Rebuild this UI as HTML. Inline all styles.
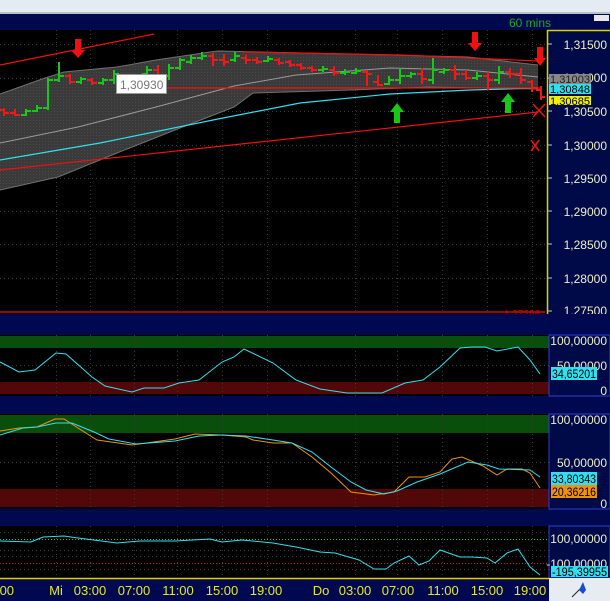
<!DOCTYPE html>
<html><head><meta charset="utf-8"><style>
html,body{margin:0;padding:0;width:610px;height:601px;overflow:hidden;background:#000;}
svg{display:block}
text{font-family:"Liberation Sans",sans-serif;}
</style></head><body>
<svg width="610" height="601" viewBox="0 0 610 601" xmlns="http://www.w3.org/2000/svg">
<defs>
<pattern id="dots" width="3" height="3" patternUnits="userSpaceOnUse"><rect width="3" height="3" fill="#3a3a3a"/><rect width="1" height="1" fill="#4a4a4a"/></pattern>
</defs>
<rect x="0" y="0" width="610" height="13" fill="#e4ebf3"/>
<rect x="0" y="12" width="610" height="2" fill="#b8c0cc"/>
<rect x="0" y="14" width="610" height="16" fill="#00094e"/>
<text x="509" y="27" font-size="12" fill="#1fa61f">60 mins</text>
<rect x="594" y="15" width="15" height="6" fill="#e8e8e8"/>
<rect x="0" y="30" width="547" height="283" fill="#000"/>
<g stroke="#3a3a3a" stroke-dasharray="1,3" stroke-width="1">
<path d="M56.5 30V313M90.5 30V313M134.5 30V313M177.5 30V313M222.5 30V313M267.5 30V313M355.5 30V313M397.5 30V313M442.5 30V313M487.5 30V313M532.5 30V313"/>
<path d="M0 44.5H547M0 78.5H547M0 111.5H547M0 145.5H547M0 178.5H547M0 211.5H547M0 244.5H547M0 278.5H547"/>
</g>
<path d="M0 94 L45 78 L64 72 L117 67 L156 60 L210 52 L218 51 L304 53 L390 55 L468 57 L538 65 L538 89 L429 87 L351 90 L253 93 L234 107 L175 130 L117 153 L58 177 L0 190 Z" fill="url(#dots)"/>
<path d="M0 94 L45 78 L64 72 L117 67 L156 60 L210 52 L218 51 L304 53 L390 55 L468 57 L538 65" fill="none" stroke="#707070"/>
<path d="M538 89 L429 87 L351 90 L253 93 L234 107 L175 130 L117 153 L58 177 L0 190" fill="none" stroke="#707070"/>
<path d="M0 143 L78 127 L156 107 L234 86 L296 75 L390 68 L468 70 L538 77" fill="none" stroke="#9a9a9a"/>
<path d="M0 160 L100 143 L218 119 L300 103 L390 94 L470 90 L538 88" fill="none" stroke="#30e0f0" stroke-width="1.2"/>
<g stroke="#f01010" stroke-width="1.2" fill="none">
<path d="M0 65 L154 34"/>
<path d="M0 170 L538 112"/>
<path d="M166 88 H542"/>
<path d="M242 52 L400 55 L538 61"/>
<path d="M0 312 H545"/>
</g>
<text x="504" y="317" font-size="10" fill="#c00">1,27296</text>
<path fill="none" stroke="#18c818" stroke-width="2" d="
M26 109V116M21 115H26M26 111H31
M37 105V112M32 111H37M37 108H42
M48 78V110M43 108H48M48 80H53
M59 62V82M54 80H59M59 76H64
M81 77V84M76 82H81M81 79H86
M103 78V85M98 83H103M103 80H108
M114 70V84M109 80H114M114 74H119
M147 66V78M142 74H147M147 70H152
M169 64V80M164 76H169M169 68H174
M180 58V70M175 68H180M180 60H185
M191 55V64M186 62H191M191 58H196
M202 52V60M197 58H202M202 56H207
M235 52V62M230 60H235M235 56H240
M268 56V62M263 61H268M268 59H273
M323 66V72M318 70H323M323 69H328
M345 69V75M340 73H345M345 72H350
M356 68V74M351 73H356M356 71H361
M389 76V85M384 84H389M389 80H394
M400 68V84M395 80H400M400 76H405
M411 72V78M406 76H411M411 74H416
M433 58V84M428 80H433M433 70H438
M444 68V74M439 72H444M444 70H449
M477 72V80M472 78H477M477 76H482
M499 66V84M494 80H499M499 72H504"/>
<path fill="none" stroke="#f01818" stroke-width="2" d="
M4 108V116M0 110H4M4 113H9
M15 109V116M10 113H15M15 115H20
M70 74V84M65 76H70M70 82H75
M92 78V85M87 80H92M92 83H97
M158 65V82M153 70H158M158 78H163
M213 53V66M208 56H213M213 60H218
M224 54V66M219 60H224M224 62H229
M246 55V64M241 58H246M246 60H251
M257 57V64M252 60H257M257 62H262
M279 58V65M274 60H279M279 63H284
M290 60V67M285 62H290M290 65H295
M301 63V70M296 65H301M301 68H306
M312 66V72M307 68H312M312 70H317
M334 66V76M329 70H334M334 73H339
M367 70V86M362 72H367M367 74H372
M378 75V86M373 82H378M378 85H383
M422 68V84M417 74H422M422 79H427
M455 65V80M450 70H455M455 74H460
M466 70V80M461 74H466M466 78H471
M488 72V90M483 76H488M488 80H493
M510 68V78M505 72H510M510 74H515
M521 68V84M516 74H521M521 80H526
M532 80V92M527 82H532M532 88H537
M541 86V100M536 90H541M541 97H545"/>
<rect x="116.5" y="74.5" width="50" height="19" fill="#fff" stroke="#9a9a9a"/>
<text x="120" y="89" font-size="12" fill="#777">1,30930</text>
<g fill="#f01010">
<path d="M75 39H81V50H85L78 58L71 50H75Z"/>
<path d="M472 32H478V43H482L475 51L468 43H472Z"/>
<path d="M537 47H543V58H546L540 66L534 58H537Z"/>
</g>
<g fill="#18c818">
<path d="M394 123H400V112H404L397 103L390 112H394Z"/>
<path d="M505 113H511V102H515L508 93L501 102H505Z"/>
</g>
<g stroke="#f01010" stroke-width="1.5"><path d="M533 104L545 117M533 117L545 104"/><path d="M531 140L539 151M531 151L539 140"/></g>
<rect x="547" y="30" width="63" height="284" fill="#000a48"/>
<path d="M547.5 30V314M547 30.5H610" stroke="#e0d000" stroke-width="1.5"/>
<g stroke="#c0c0c0"><path d="M548 44H552M548 78H552M548 111H552M548 145H552M548 178H552M548 211H552M548 244H552M548 278H552M548 311H552"/></g>
<g font-size="12" fill="#f0f0c8" text-anchor="end">
<text x="607" y="49">1,31500</text>
<text x="607" y="82">1,31000</text>
<text x="607" y="116">1,30500</text>
<text x="607" y="150">1,30000</text>
<text x="607" y="183">1,29500</text>
<text x="607" y="216">1,29000</text>
<text x="607" y="249">1,28500</text>
<text x="607" y="283">1,28000</text>
<text x="607" y="315">1,27500</text>
</g>
<rect x="549" y="74" width="42" height="10" fill="#888"/>
<text x="550" y="83" font-size="11" fill="#222" textLength="40" lengthAdjust="spacingAndGlyphs">1,31003</text>
<rect x="549" y="84" width="42" height="10" fill="#30e0f0"/>
<text x="550" y="93" font-size="11" fill="#000" textLength="40" lengthAdjust="spacingAndGlyphs">1,30848</text>
<rect x="549" y="96" width="42" height="9" fill="#f0f000"/>
<text x="550" y="105" font-size="11" fill="#000" textLength="40" lengthAdjust="spacingAndGlyphs">1,30685</text>
<rect x="0" y="314" width="610" height="21" fill="#000950"/>
<rect x="0" y="396" width="610" height="18" fill="#000950"/>
<rect x="0" y="509" width="610" height="17" fill="#000950"/>
<rect x="0" y="335" width="549" height="61" fill="#000"/>
<rect x="0" y="336" width="549" height="12" fill="#0a4e0c"/>
<rect x="0" y="382" width="549" height="12" fill="#520808"/>
<g stroke="#3a3a3a" stroke-dasharray="1,3"><path d="M56.5 335V396M90.5 335V396M134.5 335V396M177.5 335V396M222.5 335V396M267.5 335V396M355.5 335V396M397.5 335V396M442.5 335V396M487.5 335V396M532.5 335V396M0 365.5H549"/></g>
<path d="M0 362L19 372L35 370L56 353L66 354L92 377L105 386L132 392L144 388L164 388L179 383L199 380L222 362L234 357L244 349L273 363L296 380L320 389L347 393L382 393L405 383L423 380L440 367L460 348L472 347L485 347L497 351L518 347L530 360L540 374" fill="none" stroke="#30e0f0"/>
<rect x="549" y="335" width="61" height="61" fill="#000a48" stroke="#2a40d0"/>
<g font-size="12" fill="#f0f0c8" text-anchor="end"><text x="607" y="345">100,00000</text><text x="607" y="370">50,00000</text><text x="607" y="395">0</text></g>
<rect x="551" y="367" width="46" height="13" fill="#30e0f0"/><text x="552" y="378" font-size="12" fill="#000" textLength="44" lengthAdjust="spacingAndGlyphs">34,65201</text>
<rect x="0" y="414" width="549" height="95" fill="#000"/>
<rect x="0" y="415" width="549" height="18" fill="#0a4e0c"/>
<rect x="0" y="489" width="549" height="18" fill="#520808"/>
<g stroke="#3a3a3a" stroke-dasharray="1,3"><path d="M56.5 414V509M90.5 414V509M134.5 414V509M177.5 414V509M222.5 414V509M267.5 414V509M355.5 414V509M397.5 414V509M442.5 414V509M487.5 414V509M532.5 414V509M0 462.5H549"/></g>
<path d="M0 431L19 428L37 427L55 419L64 419L78 428L97 440L132 445L175 439L195 434L222 435L246 437L253 440L273 443L292 443L312 457L331 473L351 492L374 495L394 492L409 477L425 477L440 472L452 459L462 457L483 466L497 475L507 469L522 469L530 473L540 488" fill="none" stroke="#f09010"/>
<path d="M0 435L23 428L37 427L56 423L72 423L94 432L109 439L136 444L175 441L199 436L222 435L246 436L273 440L292 443L312 452L331 467L351 482L366 490L384 494L397 491L417 482L440 474L468 462L487 465L499 469L530 470L540 477" fill="none" stroke="#30e0f0"/>
<rect x="549" y="414" width="61" height="95" fill="#000a48" stroke="#2a40d0"/>
<g font-size="12" fill="#f0f0c8" text-anchor="end"><text x="607" y="424">100,00000</text><text x="607" y="467">50,00000</text><text x="607" y="508">0</text></g>
<rect x="551" y="472" width="46" height="13" fill="#30e0f0"/><text x="552" y="483" font-size="12" fill="#000" textLength="44" lengthAdjust="spacingAndGlyphs">33,80343</text>
<rect x="551" y="485" width="46" height="13" fill="#f09010"/><text x="552" y="496" font-size="12" fill="#000" textLength="44" lengthAdjust="spacingAndGlyphs">20,36216</text>
<rect x="0" y="526" width="549" height="52" fill="#000"/>
<g stroke="#3a3a3a" stroke-dasharray="1,3"><path d="M56.5 526V578M90.5 526V578M134.5 526V578M177.5 526V578M222.5 526V578M267.5 526V578M355.5 526V578M397.5 526V578M442.5 526V578M487.5 526V578M532.5 526V578M0 532.5H549M0 550.5H549M0 556.5H549M0 569.5H549"/></g>
<path d="M0 539.5H549" stroke="#30c030" stroke-dasharray="1,2"/>
<path d="M0 563.5H549" stroke="#d02020" stroke-dasharray="1,2"/>
<path d="M0 541L31 542L43 537L64 536L78 538L117 543L140 541L175 541L210 539L222 542L242 540L273 543L296 547L320 552L335 553L359 560L374 569L386 569L394 563L409 556L419 565L429 561L440 550L460 557L472 557L487 558L495 563L507 553L518 549L530 567L540 575" fill="none" stroke="#30e0f0"/>
<rect x="549" y="526" width="61" height="52" fill="#000a48" stroke="#2a40d0"/>
<g font-size="12" fill="#f0f0c8" text-anchor="end"><text x="607" y="543">100,00000</text><text x="607" y="568">-100,00000</text></g>
<rect x="551" y="566" width="57" height="11" fill="#30e0f0"/><text x="552" y="576" font-size="12" fill="#000" textLength="55" lengthAdjust="spacingAndGlyphs">-195,39955</text>
<rect x="0" y="578" width="549" height="23" fill="#000950"/>
<path d="M0 578.5H549" stroke="#e0d000" stroke-width="1.5"/>
<g font-size="13" fill="#e8e820" text-anchor="middle">
<text x="5" y="595">:00</text><text x="56" y="595">Mi</text><text x="90" y="595">03:00</text><text x="134" y="595">07:00</text><text x="178" y="595">11:00</text><text x="222" y="595">15:00</text><text x="266" y="595">19:00</text><text x="321" y="595">Do</text><text x="355" y="595">03:00</text><text x="398" y="595">07:00</text><text x="443" y="595">11:00</text><text x="487" y="595">15:00</text><text x="530" y="595">19:00</text>
</g>
<rect x="549" y="578" width="61" height="23" fill="#e6ecf2"/>
<path d="M572 597L580 589" stroke="#222"/>
<path d="M579 590L583 582L586 590L583 594Z" fill="#1a4ad8"/>
</svg>
</body></html>
